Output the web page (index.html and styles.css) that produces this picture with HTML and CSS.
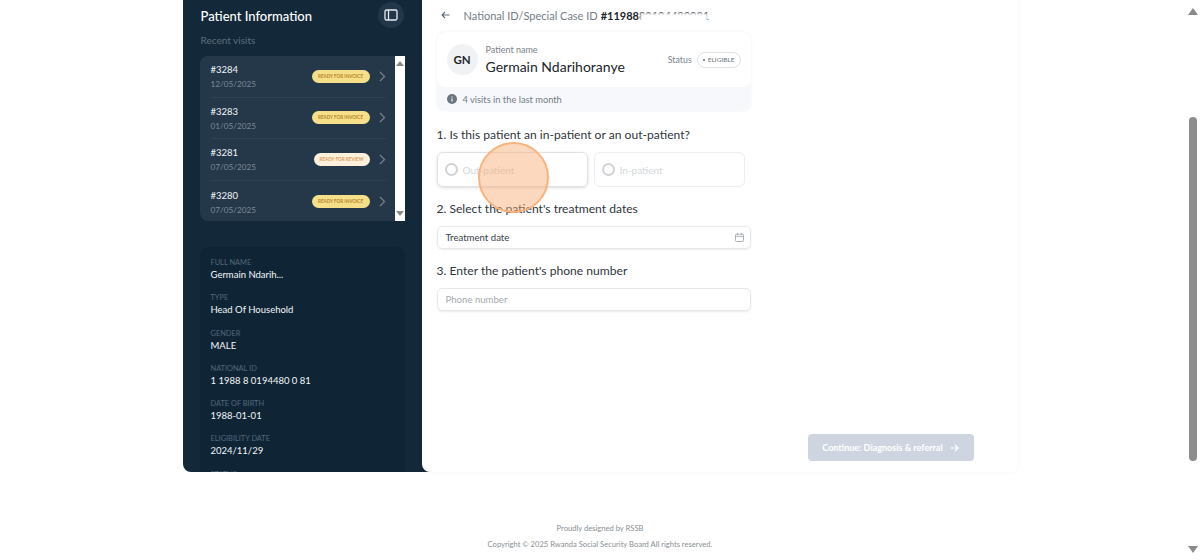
FILE: index.html
```html
<!DOCTYPE html>
<html lang="en">
<head>
    <meta charset="UTF-8">
    <title>Patient Information</title>
    <link rel="stylesheet" href="styles.css">
</head>
<body>

<div class="shell">
    <aside class="sidebar">
        <div class="side-head">
            <h2>Patient Information</h2>
            <button class="toggle" type="button">
                <svg width="14" height="12" viewBox="0 0 14 12" fill="none" stroke="#e8edf2" stroke-width="1.3"><rect x="1" y="1" width="12" height="10" rx="1.5"/><path d="M4.5 1v10"/></svg>
            </button>
        </div>
        <div class="side-sub">Recent visits</div>

        <div class="visits">
            <ul class="visit-list">
                <li class="visit">
                    <div class="visit-info"><div class="visit-id">#3284</div><div class="visit-date">12/05/2025</div></div>
                    <span class="tag tag-invoice">READY FOR INVOICE</span>
                    <svg class="chev" width="7" height="11" viewBox="0 0 7 11" fill="none" stroke="#74838f" stroke-width="1.2"><path d="M1 1l4.5 4.5L1 10"/></svg>
                </li>
                <li class="visit">
                    <div class="visit-info"><div class="visit-id">#3283</div><div class="visit-date">01/05/2025</div></div>
                    <span class="tag tag-invoice">READY FOR INVOICE</span>
                    <svg class="chev" width="7" height="11" viewBox="0 0 7 11" fill="none" stroke="#74838f" stroke-width="1.2"><path d="M1 1l4.5 4.5L1 10"/></svg>
                </li>
                <li class="visit">
                    <div class="visit-info"><div class="visit-id">#3281</div><div class="visit-date">07/05/2025</div></div>
                    <span class="tag tag-review">READY FOR REVIEW</span>
                    <svg class="chev" width="7" height="11" viewBox="0 0 7 11" fill="none" stroke="#74838f" stroke-width="1.2"><path d="M1 1l4.5 4.5L1 10"/></svg>
                </li>
                <li class="visit">
                    <div class="visit-info"><div class="visit-id">#3280</div><div class="visit-date">07/05/2025</div></div>
                    <span class="tag tag-invoice">READY FOR INVOICE</span>
                    <svg class="chev" width="7" height="11" viewBox="0 0 7 11" fill="none" stroke="#74838f" stroke-width="1.2"><path d="M1 1l4.5 4.5L1 10"/></svg>
                </li>
            </ul>
            <div class="mini-scroll">
                <span class="arrow-up"></span>
                <span class="arrow-down"></span>
            </div>
        </div>

        <dl class="details">
            <dt>FULL NAME</dt><dd>Germain Ndarih...</dd>
            <dt>TYPE</dt><dd>Head Of Household</dd>
            <dt>GENDER</dt><dd>MALE</dd>
            <dt>NATIONAL ID</dt><dd>1 1988 8 0194480 0 81</dd>
            <dt>DATE OF BIRTH</dt><dd>1988-01-01</dd>
            <dt>ELIGIBILITY DATE</dt><dd>2024/11/29</dd>
            <dt>STATUS</dt>
        </dl>
    </aside>

    <main class="main">
        <div class="crumb">
            <svg width="9" height="8" viewBox="0 0 9 8" fill="none" stroke="#5f6b76" stroke-width="1.1"><path d="M8.5 4H1M4 1L1 4l3 3"/></svg>
            <span class="crumb-label">National ID/Special Case ID</span>
            <strong class="crumb-id">#1198880194480081</strong>
            <span class="redact"></span>
        </div>

        <section class="patient-card">
            <div class="patient-top">
                <div class="avatar">GN</div>
                <div class="patient-name">
                    <div class="small-label">Patient name</div>
                    <div class="big-name">Germain Ndarihoranye</div>
                </div>
                <span class="status-label">Status</span>
                <span class="badge"><i class="dot"></i>ELIGIBLE</span>
            </div>
            <div class="patient-foot">
                <svg width="10" height="10" viewBox="0 0 10 10"><circle cx="5" cy="5" r="5" fill="#6b7580"/><path d="M5 4.4v3M5 2.4v1" stroke="#fff" stroke-width="1.1"/></svg>
                4 visits in the last month
            </div>
        </section>

        <h3 class="question q1">1. Is this patient an in-patient or an out-patient?</h3>
        <div class="options">
            <div class="option option-hover"><i class="radio"></i>Out-patient</div>
            <div class="option"><i class="radio"></i>In-patient</div>
        </div>

        <h3 class="question q2">2. Select the patient's treatment dates</h3>
        <div class="field field-date">
            <span>Treatment date</span>
            <svg width="9" height="9" viewBox="0 0 9 9" fill="none" stroke="#9aa1a9" stroke-width="0.8"><rect x="0.5" y="1.2" width="8" height="7.3" rx="1"/><path d="M0.5 3.4h8M2.6 0v2M6.4 0v2"/></svg>
        </div>

        <h3 class="question q3">3. Enter the patient's phone number</h3>
        <div class="field field-phone">Phone number</div>

        <div class="actions">
            <button class="continue" type="button">
                Continue: Diagnosis &amp; referral
                <svg width="8" height="8" viewBox="0 0 8 8" fill="none" stroke="#fff" stroke-width="1.1"><path d="M0 4h7M4 1l3 3-3 3"/></svg>
            </button>
        </div>

        <div class="click-mark"></div>
    </main>
</div>

<footer class="footer">
    <p>Proudly designed by RSSB</p>
    <p>Copyright © 2025 Rwanda Social Security Board All rights reserved.</p>
</footer>

<div class="page-scroll">
    <span class="arrow-up"></span>
    <span class="thumb"></span>
    <span class="arrow-down"></span>
</div>

</body>
</html>
```

FILE: styles.css
```css
body {
    font-family: Lato, "Open Sans", sans-serif;
    margin: 0;
    background-color: #ffffff;
    color: #2a3138;
    height: 560px;
    overflow: hidden;
}
p, h2, h3, ul, dl, dd {
    margin: 0;
    padding: 0;
}
.shell {
    display: flex;
    width: 835px;
    height: 472px;
    margin: 0 auto;
    background: linear-gradient(to right, #132838 250px, transparent 250px);
    border-radius: 0 0 8px 8px;
}
.sidebar {
    width: 239px;
    flex: none;
    box-sizing: border-box;
    padding: 2px 16px 0 17px;
    color: #fff;
    overflow: hidden;
    height: 472px;
}
.side-head {
    display: flex;
    justify-content: space-between;
    align-items: center;
    padding-left: 1px;
    height: 27px;
}
.side-head h2 {
    font-size: 13px;
    font-weight: 500;
}
.toggle {
    width: 26px;
    height: 26px;
    margin: -1px 2px 0 0;
    padding: 0;
    border: none;
    border-radius: 50%;
    background: #22374a;
    display: flex;
    align-items: center;
    justify-content: center;
}
.side-sub {
    margin: 4px 0 0 1px;
    font-size: 10px;
    line-height: 14px;
    color: #5d6f7e;
}
.visits {
    display: flex;
    height: 165px;
    margin-top: 9px;
}
.visit-list {
    list-style: none;
    width: 195px;
    box-sizing: border-box;
    padding: 0 9px 0 11px;
    background: #25384a;
    border-radius: 8px 0 0 8px;
}
.visit {
    display: flex;
    align-items: center;
    height: 41.6px;
    box-sizing: border-box;
    border-bottom: 1px solid #2e4153;
}
.visit:last-child {
    border-bottom: none;
}
.visit-info {
    margin-top: 2px;
}
.visit-id {
    font-size: 9.5px;
    line-height: 14px;
    color: #f2f5f7;
}
.visit-date {
    font-size: 8.2px;
    line-height: 14px;
    color: #7b8a97;
}
.tag {
    margin-left: auto;
    height: 13px;
    line-height: 13px;
    border-radius: 7px;
    font-size: 4.6px;
    font-weight: 700;
    text-align: center;
    white-space: nowrap;
}
.tag-invoice {
    width: 58px;
    background: #f5e089;
    color: #b5862a;
}
.tag-review {
    width: 56px;
    background: #fdf0dd;
    color: #d9a05b;
}
.chev {
    margin: 0 0 0 9px;
    flex: none;
}
.mini-scroll {
    width: 10px;
    background: #fff;
    display: flex;
    flex-direction: column;
    justify-content: space-between;
    align-items: center;
    padding: 5px 0;
    box-sizing: border-box;
}
.mini-scroll .arrow-up {
    border-left-width: 4px;
    border-right-width: 4px;
    border-bottom-width: 5px;
}
.mini-scroll .arrow-down {
    border-left-width: 4px;
    border-right-width: 4px;
    border-top-width: 5px;
}
.arrow-up {
    width: 0;
    height: 0;
    border-left: 5px solid transparent;
    border-right: 5px solid transparent;
    border-bottom: 7px solid #8a8a8a;
}
.arrow-down {
    width: 0;
    height: 0;
    border-left: 5px solid transparent;
    border-right: 5px solid transparent;
    border-top: 7px solid #8a8a8a;
}
.details {
    margin-top: 26px;
    padding: 11px 11px 0;
    width: 205px;
    box-sizing: border-box;
    background: #0f2536;
    border-radius: 8px;
}
.details dt {
    font-size: 7.4px;
    line-height: 10px;
    color: #53677a;
}
.details dd {
    font-size: 9.5px;
    line-height: 14px;
    color: #f4f6f8;
    margin-bottom: 11.3px;
}
.main {
    flex: 1;
    position: relative;
    background: #fff;
    border-radius: 0 0 8px 8px;
    padding-left: 15px;
    box-shadow: 0 0 6px rgba(0, 0, 0, 0.04);
}
.crumb {
    display: flex;
    align-items: center;
    height: 30px;
    margin-bottom: 2px;
    padding-left: 4px;
    font-size: 11px;
    color: #747d86;
}
.crumb-label {
    margin-left: 14px;
}
.crumb-id {
    margin-left: 3px;
    color: #20262c;
    font-weight: 700;
}
.redact {
    position: absolute;
    left: 218px;
    top: 13px;
    width: 68px;
    height: 12px;
    background: #fff;
    filter: blur(1.5px);
}
.patient-card {
    width: 314px;
    height: 79px;
    border-radius: 8px;
    background: #f7f8fb;
    overflow: hidden;
    box-shadow: 0 0 3px rgba(0, 0, 0, 0.06);
}
.patient-top {
    height: 55px;
    display: flex;
    align-items: center;
    padding: 0 10px;
    background: #fff;
    border-radius: 8px;
}
.avatar {
    width: 31px;
    height: 31px;
    border-radius: 50%;
    background: #f1f2f4;
    text-align: center;
    line-height: 31px;
    font-size: 11.5px;
    font-weight: 700;
    color: #1f262d;
}
.patient-name {
    margin-left: 8px;
    padding-top: 2px;
    flex: 1;
}
.small-label {
    font-size: 9px;
    line-height: 12px;
    color: #7a838c;
}
.big-name {
    font-size: 14px;
    line-height: 20px;
    margin-top: 1px;
    color: #20262c;
}
.status-label {
    font-size: 8.8px;
    color: #7a838c;
    margin-right: 5px;
}
.badge {
    display: flex;
    align-items: center;
    height: 16px;
    box-sizing: border-box;
    padding: 0 5px;
    border: 1px solid #dde1e5;
    border-radius: 8px;
    font-size: 6.5px;
    color: #6d7780;
}
.dot {
    width: 2px;
    height: 2px;
    margin-right: 3px;
    border-radius: 50%;
    background: #6d7780;
}
.patient-foot {
    display: flex;
    align-items: center;
    gap: 6px;
    height: 24px;
    padding-left: 10px;
    font-size: 9.3px;
    color: #747d86;
}
.question {
    font-size: 12.1px;
    font-weight: 400;
    line-height: 16px;
    color: #2f363d;
}
.q1 {
    margin-top: 16px;
}
.q2 {
    margin-top: 14px;
}
.q3 {
    margin-top: 14px;
}
.options {
    display: flex;
    gap: 6px;
    margin-top: 9px;
}
.option {
    width: 151px;
    height: 35px;
    box-sizing: border-box;
    display: flex;
    align-items: center;
    padding-left: 7px;
    border: 1px solid #eceef0;
    border-radius: 6px;
    font-size: 10px;
    color: #d4d7da;
}
.option-hover {
    border-color: #dfe2e5;
    box-shadow: 0 1px 3px rgba(0, 0, 0, 0.14);
}
.radio {
    width: 13px;
    height: 13px;
    box-sizing: border-box;
    margin-right: 5px;
    border: 2.5px solid #cfd2d6;
    border-radius: 50%;
}
.field {
    width: 314px;
    box-sizing: border-box;
    display: flex;
    align-items: center;
    justify-content: space-between;
    padding: 0 6px 0 8px;
    border: 1px solid #e6e8eb;
    border-radius: 5px;
    font-size: 9.6px;
    box-shadow: 0 1px 2px rgba(0, 0, 0, 0.08);
}
.field-date {
    height: 23px;
    margin-top: 9px;
    color: #39424a;
}
.field-phone {
    height: 23px;
    margin-top: 9px;
    color: #a3aab0;
}
.actions {
    display: flex;
    justify-content: flex-end;
    width: 537px;
    margin-top: 123px;
}
.continue {
    display: flex;
    align-items: center;
    justify-content: center;
    gap: 8px;
    width: 166px;
    height: 27px;
    border: none;
    border-radius: 4px;
    background: #cfd5e0;
    color: #fff;
    font-family: inherit;
    font-size: 9px;
    font-weight: 700;
    white-space: nowrap;
}
.click-mark {
    position: absolute;
    left: 56px;
    top: 142px;
    width: 71px;
    height: 71px;
    box-sizing: border-box;
    border: 2.5px solid #fbb27a;
    border-radius: 50%;
    background: rgba(249, 170, 110, 0.45);
}
.footer {
    padding-top: 50px;
    text-align: center;
    font-size: 7.6px;
    color: #8a8f94;
}
.footer p {
    line-height: 12px;
    margin-bottom: 4px;
}
.page-scroll {
    position: absolute;
    right: 2px;
    top: 8px;
    bottom: 7px;
    width: 10px;
    display: flex;
    flex-direction: column;
    align-items: center;
}
.page-scroll .thumb {
    width: 8px;
    height: 344px;
    margin-top: 102px;
    background: #8d8d8d;
    border-radius: 4px;
}
.page-scroll .arrow-down {
    margin-top: auto;
}
```
